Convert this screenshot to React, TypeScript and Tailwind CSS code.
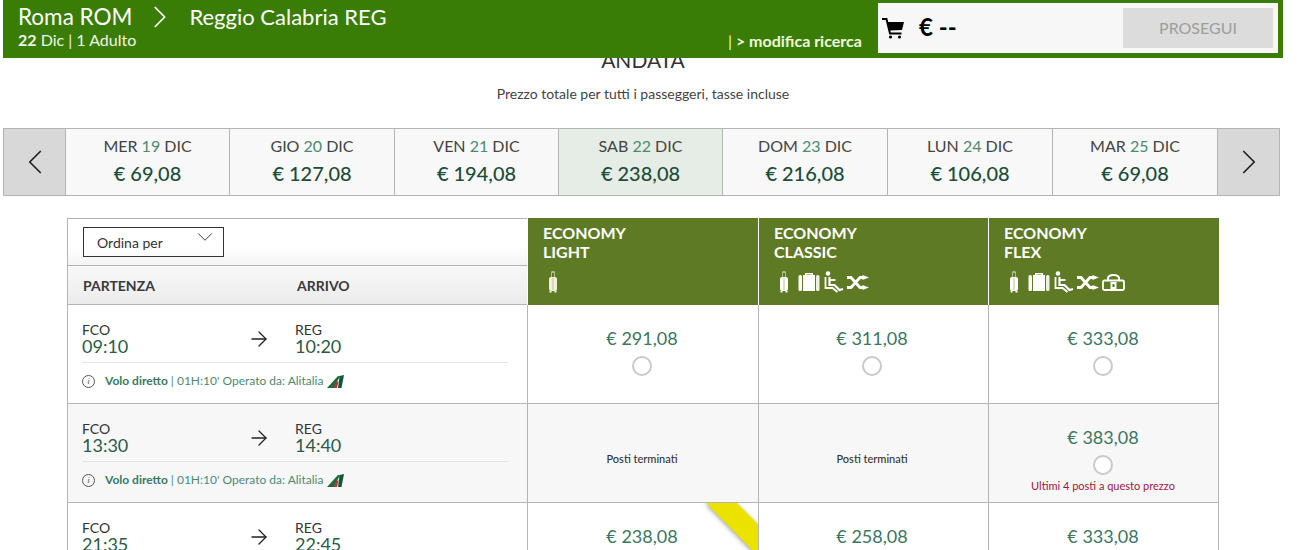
import React from 'react';
import { ArrowRight, ChevronDown, ChevronLeft, ChevronRight } from 'lucide-react';

const Small = ({ light }: { light?: boolean }) => (
  <svg width="10" height="22" viewBox="0 0 10 22">
    <path d="M3.500 0.500h3v6H6V1.500H4v5h-.5z" fill="white" />
    <rect x="1" y="6" width="8" height="14" rx="2" fill={light ? '#f2f0d8' : 'white'} />
    <rect x="4.500" y="7" width="1" height="12" fill="#b9c49a" />
    <rect x="1.500" y="20" width="2" height="1.500" fill="white" />
    <rect x="6.500" y="20" width="2" height="1.500" fill="white" />
  </svg>
);
const Big = () => (
  <svg width="22" height="20" viewBox="0 0 22 20">
    <path d="M7 3V1h8v2h-1.500V2.500h-5V3z" fill="white" />
    <rect x="0.500" y="3" width="3.500" height="16" rx="1.500" fill="white" />
    <rect x="5" y="3" width="12" height="16" fill="white" />
    <rect x="18" y="3" width="3.500" height="16" rx="1.500" fill="#f0f0e0" />
  </svg>
);
const Seat = () => (
  <svg width="22" height="22" viewBox="0 0 22 22" fill="none" stroke="white">
    <circle cx="5" cy="2.500" r="2.300" fill="white" stroke="none" />
    <path d="M2.500 6v11h7l5 4" strokeWidth="1.800" />
    <path d="M6.500 6v8h5l5 5 3.500-1" strokeWidth="2.200" />
    <path d="M7 9h5.500" strokeWidth="1.800" />
  </svg>
);
const Cross = () => (
  <svg width="22" height="15" viewBox="0 0 22 15" fill="none" stroke="white" strokeWidth="2.800">
    <path d="M0 2.500h4l9 10h3M0 12.500h4l9-10h3" />
    <path d="M15.500 0l6.500 2.500-6.500 2.500zM15.500 10l6.500 2.500-6.500 2.500z" fill="white" stroke="none" />
  </svg>
);
const Lock = () => (
  <svg width="23" height="17" viewBox="0 0 23 17" fill="none" stroke="white">
    <path d="M6 7V4.500C6 2 8 1 11.500 1S17 2 17 4.500V7" strokeWidth="2" />
    <rect x="1" y="6.500" width="21" height="9.500" rx="1.500" strokeWidth="1.800" />
    <rect x="8.500" y="8" width="6" height="7" fill="white" stroke="none" />
    <rect x="10.500" y="10" width="2" height="3" fill="#5f7a25" stroke="none" />
  </svg>
);
const Cart = () => (
  <svg width="22" height="21" viewBox="0 0 22 21" className="shrink-0">
    <path d="M0 1h4.500l3.500 14.500h11.500" fill="none" stroke="black" strokeWidth="2" />
    <polygon points="5,4 22,4 20,12 7,12.500" fill="black" />
    <circle cx="8.500" cy="19" r="1.600" fill="black" />
    <circle cx="17.500" cy="19" r="1.600" fill="black" />
  </svg>
);
const AzLogo = () => (
  <svg width="17" height="13" viewBox="0 0 17 13">
    <path d="M0 13 L11 1 L13 1 L7 13z" fill="#1f6b3d" />
    <path d="M6.500 13 L9.500 6.500 L11.500 6.500 L10 13z" fill="#b8323a" />
    <path d="M11 13 L12.500 1 L17 0 L14.500 13z" fill="#14563a" />
  </svg>
);
const Info = () => (
  <span className="flex h-[13px] w-[13px] shrink-0 items-center justify-center rounded-full border border-[#555] text-[9px] italic leading-none text-[#555] [font-family:'Liberation_Serif',serif]">
    i
  </span>
);
const Radio = () => <span className="block h-5 w-5 rounded-full border-2 border-[#c9c9c9] bg-white" />;

const dates = [
  ['MER', '19', '€ 69,08', 'w-[164px]'],
  ['GIO', '20', '€ 127,08', 'w-[165px]'],
  ['VEN', '21', '€ 194,08', 'w-[164px]'],
  ['SAB', '22', '€ 238,08', 'w-[164px]'],
  ['DOM', '23', '€ 216,08', 'w-[165px]'],
  ['LUN', '24', '€ 106,08', 'w-[165px]'],
  ['MAR', '25', '€ 69,08', 'w-[165px]'],
];

const Price = ({ p, note, ribbon, bg }: { p?: string; note?: string; ribbon?: boolean; bg: string }) => (
  <div className={`relative flex flex-col items-center overflow-hidden border-l border-[#b4b4b4] ${bg}`}>
    {ribbon && (
      <svg width="53" height="48" viewBox="0 0 53 48" className="absolute right-0 top-0 drop-shadow-[-1px_1px_2px_rgba(0,0,0,0.35)]">
        <polygon points="1,0 32,0 53,21 53,48 48,48" fill="#ebe200" />
      </svg>
    )}
    {p ? (
      <>
        <div className="mt-[22px] text-[18px] leading-[22px] text-[#3c7560]">{p}</div>
        <div className="mt-[7px]">
          <Radio />
        </div>
        {note && <div className="mt-[4px] text-[11px] leading-[14px] text-[#a3163a]">{note}</div>}
      </>
    ) : (
      <div className="mt-[47px] text-[11px] font-medium leading-[16px] text-[#333]">Posti terminati</div>
    )}
  </div>
);

const Flight = ({ a, b, bg }: { a: string; b: string; bg: string }) => (
  <div className={`pl-[14px] pr-[19px] pt-[17px] ${bg}`}>
    <div className="flex border-b border-[#e4e4e4] pb-[7px]">
      <div className="w-[160px]">
        <div className="text-[14px] leading-[15px] text-[#333]">FCO</div>
        <div className="text-[18px] leading-[18px] text-[#2c5a47]">{a}</div>
      </div>
      <div className="flex w-[53px] items-center">
        <ArrowRight size={24} strokeWidth={1.300} className="ml-[5px] text-[#222]" />
      </div>
      <div>
        <div className="text-[14px] leading-[15px] text-[#333]">REG</div>
        <div className="text-[18px] leading-[18px] text-[#2c5a47]">{b}</div>
      </div>
    </div>
    <div className="mt-[11px] flex items-center text-[12px] leading-[14px] text-[#4d8a72]">
      <Info />
      <span className="ml-[10px] font-bold text-[#3b7a60]">Volo diretto</span>
      <span className="ml-[3px]">| 01H:10' Operato da: Alitalia</span>
      <span className="ml-[4px]">
        <AzLogo />
      </span>
    </div>
  </div>
);

const FareHead = ({ l, children }: { l: string; children: React.ReactNode }) => (
  <div className="flex flex-col border-l border-white bg-[#5f7a25] pl-[15px] pt-[5px]">
    <div className="text-[16px] font-bold leading-[19px] text-white">
      ECONOMY
      <br />
      {l}
    </div>
    <div className="mt-[10px] flex h-[22px] items-center pl-[5px]">{children}</div>
  </div>
);

const Set = ({ flex }: { flex?: boolean }) => (
  <>
    <Small />
    <span className="ml-[9px]">
      <Big />
    </span>
    <span className="ml-[3px]">
      <Seat />
    </span>
    <span className="ml-[2px]">
      <Cross />
    </span>
    {flex && (
      <span className="ml-[3px]">
        <Lock />
      </span>
    )}
  </>
);

export default function App() {
  return (
    <div className="h-[550px] w-[1313px] overflow-hidden bg-white [font-family:Lato,'Liberation_Sans',sans-serif]">
      <header className="relative z-10 ml-[3px] flex h-[58px] w-[1280px] bg-[#3a7d06]">
        <div className="w-[725px] pl-[15px] text-white">
          <div className="flex h-[30px] pt-[4px] text-[22.500px] leading-[26px]">
            <span>Roma ROM</span>
            <ChevronRight size={38} strokeWidth={1.100} className="ml-[9px] -mt-[6px]" />
            <span className="ml-[10px] text-[22px]">Reggio Calabria REG</span>
          </div>
          <div className="text-[16px] leading-[20px] text-[#eef5e4]">
            <b>22</b> Dic | 1 Adulto
          </div>
        </div>
        <div className="flex w-[150px] items-end pb-[9px] text-[16px] font-bold leading-[17px] text-[#f0f8dc]">
          <span className="font-normal">|</span>&nbsp;&gt; modifica ricerca
        </div>
        <div className="mt-[3px] flex h-[50px] w-[400px] items-center bg-[#f7f7f7] pl-[4px] pr-[5px]">
          <Cart />
          <span className="ml-[15px] -mt-[2px] text-[24px] font-bold leading-none text-black">€ --</span>
          <div className="ml-auto -mt-px flex h-10 w-[150px] items-center justify-center bg-[#dcdcdc] text-[16px] text-[#9d9d9d]">
            PROSEGUI
          </div>
        </div>
      </header>

      <div className="-mt-[10px] h-[70px] w-[1286px] text-center">
        <div className="text-[21px] leading-[24px] text-[#333]">ANDATA</div>
        <div className="mt-[13px] text-[14px] leading-[18px] text-[#444]">Prezzo totale per tutti i passeggeri, tasse incluse</div>
      </div>

      <div className="ml-[3px] mt-[10px] flex h-[68px] w-[1277px] border border-[#b4b4b4]">
        <div className="flex w-[61px] shrink-0 items-center justify-center bg-[#d8d8d8]">
          <ChevronLeft size={42} strokeWidth={1} className="text-[#222]" />
        </div>
        {dates.map(([d, n, p, w], i) => (
          <div
            key={d}
            className={`flex shrink-0 flex-col items-center border-l border-[#b4b4b4] pt-[7px] ${w} ${i === 3 ? 'bg-[#e6ede6]' : 'bg-[#f8f8f8]'}`}
          >
            <div className="text-[16px] leading-[20px] text-[#444]">
              {d} <span className="text-[#4a8a70]">{n}</span> DIC
            </div>
            <div className="mt-[5px] text-[20px] font-medium leading-[24px] text-[#1c4d38]">{p}</div>
          </div>
        ))}
        <div className="flex grow items-center justify-center border-l border-[#b4b4b4] bg-[#d8d8d8]">
          <ChevronRight size={42} strokeWidth={1} className="text-[#222]" />
        </div>
      </div>

      <div className="ml-[67px] mt-[22px] grid w-[1152px] grid-cols-[460px_231px_230px_231px]">
        <div className="h-[87px] border-y border-l border-[#b4b4b4]">
          <div className="h-[47px] border-b border-[#b4b4b4] bg-white pl-[15px] pt-[8px] [background-image:linear-gradient(#fff_60%,#f4f4f4)]">
            <div className="relative flex h-[30px] w-[141px] items-center border border-[#333] pl-[13px] text-[14px] text-[#333]">
              Ordina per
              <ChevronDown size={26} strokeWidth={0.900} className="absolute right-[5px] top-[-4px] text-[#333]" />
            </div>
          </div>
          <div className="flex h-[38px] items-center bg-[linear-gradient(#f8f8f8,#ececec)] pl-[15px] text-[14px] font-bold text-[#3a3a3a]">
            <span className="w-[214px]">PARTENZA</span>
            <span>ARRIVO</span>
          </div>
        </div>
        <FareHead l="LIGHT">
          <Small light />
        </FareHead>
        <FareHead l="CLASSIC">
          <Set />
        </FareHead>
        <FareHead l="FLEX">
          <Set flex />
        </FareHead>

        <div className="h-[98px] border-l border-[#b4b4b4]">
          <Flight a="09:10" b="10:20" bg="h-full bg-white" />
        </div>
        <Price p="€ 291,08" bg="bg-white pr-[2px]" />
        <Price p="€ 311,08" bg="bg-white pr-[3px]" />
        <div className="grid border-r border-[#b4b4b4]">
          <Price p="€ 333,08" bg="bg-white pr-[1px]" />
        </div>
        <div className="col-span-4 h-px bg-[#b4b4b4]" />

        <div className="h-[98px] border-l border-[#b4b4b4]">
          <Flight a="13:30" b="14:40" bg="h-full bg-[#f7f7f7]" />
        </div>
        <Price bg="bg-[#f7f7f7] pr-[2px]" />
        <Price bg="bg-[#f7f7f7] pr-[3px]" />
        <div className="grid border-r border-[#b4b4b4]">
          <Price p="€ 383,08" note="Ultimi 4 posti a questo prezzo" bg="bg-[#f7f7f7] pr-[1px]" />
        </div>
        <div className="col-span-4 h-px bg-[#b4b4b4]" />

        <div className="h-[98px] border-l border-[#b4b4b4]">
          <Flight a="21:35" b="22:45" bg="h-full bg-white" />
        </div>
        <Price p="€ 238,08" ribbon bg="bg-white pr-[2px]" />
        <Price p="€ 258,08" bg="bg-white pr-[3px]" />
        <div className="grid border-r border-[#b4b4b4]">
          <Price p="€ 333,08" bg="bg-white pr-[1px]" />
        </div>
      </div>
    </div>
  );
}
